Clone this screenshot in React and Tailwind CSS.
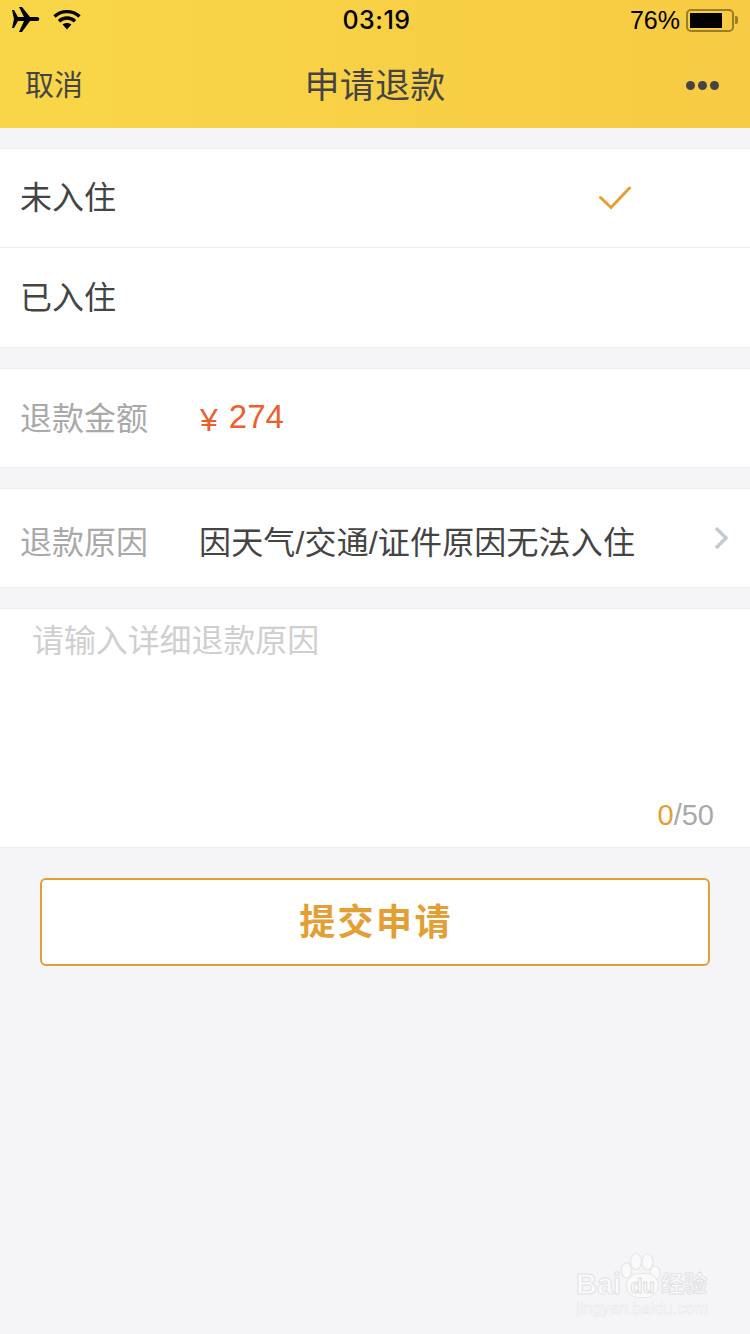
import React from 'react';

const font = { fontFamily: '"Liberation Sans", "Noto Sans CJK SC", sans-serif' };

const Plane = () => (
  <svg width="28" height="26" viewBox="0 0 28 26" className="text-black">
    <path fill="currentColor" d="M0 3 L2 3 L6 10 L12 10 L7 0 L10 0 L18 10 L25 10 C28 10 28 14 25 14 L18 14 L10 25 L7 25 L12 14 L6 14 L2 21 L0 21 L2 12 Z" />
  </svg>
);

const Wifi = () => (
  <svg width="28" height="22" viewBox="0 0 28 22">
    <path fill="none" stroke="#000" strokeWidth="3.4" d="M1.5 7.5 C8.5 1 19.5 1 26.5 7.5" />
    <path fill="none" stroke="#000" strokeWidth="3.4" d="M6 12.2 C10.5 8 17.5 8 22 12.2" />
    <path fill="#000" d="M9.6 15.4 C12 13.4 16 13.4 18.4 15.4 L14 20.6 Z" />
  </svg>
);

const Battery = () => (
  <div className="flex items-center">
    <div className="w-[48px] h-[23px] rounded-[5px] border-2 border-[#9a7d26] p-[2px] flex">
      <div className="w-[32px] h-full bg-black" />
    </div>
    <div className="w-[3px] h-[8px] bg-[#9a7d26] rounded-r-[2px] ml-[1px]" />
  </div>
);

const Row = ({ children, className = '' }) => (
  <div className={`bg-white border-y border-[#ececee] flex items-center ${className}`}>{children}</div>
);

export default function App() {
  return (
    <div style={font} className="w-[750px] h-[1334px] bg-[#f5f5f7] overflow-hidden relative flex flex-col">
      {/* header */}
      <div className="h-[128px] shrink-0 bg-gradient-to-r from-[#f9d648] to-[#f7cb43]">
        <div className="h-[40px] flex items-center justify-between pl-[12px] pr-[12px]">
          <div className="flex items-center gap-[13px] w-[200px]">
            <Plane />
            <Wifi />
          </div>
          <span className="text-[25px] font-medium text-black font-['Inter'] -mr-[3px] tracking-[0.5px] pt-[2px]">03:19</span>
          <div className="flex items-center justify-end gap-[6px] w-[200px]">
            <span className="text-[25px] text-black pt-[2px]">76%</span>
            <Battery />
          </div>
        </div>
        <div className="h-[88px] flex items-center justify-between pl-[25px] pr-[31px] pt-[3px]">
          <span className="w-[120px] text-[29px] text-[#444] pt-[2px]">取消</span>
          <span className="text-[35px] text-[#444] tracking-[0.3px] ml-[6px] pt-[2px]">申请退款</span>
          <div className="w-[120px] flex justify-end gap-[3px] -mt-[1px]">
            <i className="w-[9px] h-[9px] rounded-full bg-[#444]" />
            <i className="w-[9px] h-[9px] rounded-full bg-[#444]" />
            <i className="w-[9px] h-[9px] rounded-full bg-[#444]" />
          </div>
        </div>
      </div>

      {/* stay status */}
      <div className="mt-[20px] bg-white border-y border-[#ececee]">
        <div className="h-[99px] flex items-center justify-between pl-[20px] pr-[119px] border-b border-[#ececee]">
          <span className="text-[32px] text-[#444]">未入住</span>
          <svg width="32" height="24" viewBox="0 0 32 24">
            <path fill="none" stroke="#e39f33" strokeWidth="3" strokeLinecap="round" d="M1.5 11.5 L12 21.5 L30.5 2" />
          </svg>
        </div>
        <div className="h-[99px] flex items-center pl-[20px]">
          <span className="text-[32px] text-[#444]">已入住</span>
        </div>
      </div>

      {/* amount */}
      <Row className="mt-[20px] h-[100px] pl-[20px]">
        <span className="w-[180px] text-[32px] text-[#a9a9a9] pt-[2px]">退款金额</span>
        <span className="text-[#ee5f2c] text-[33px] flex items-baseline gap-[11px] -mt-[2px]">
          <span className="text-[32px] relative top-[3px]">¥</span>
          <span>274</span>
        </span>
      </Row>

      {/* reason */}
      <Row className="mt-[20px] h-[100px] pl-[20px] pr-[21px] justify-between">
        <div className="flex items-center pt-[9px]">
          <span className="w-[179px] text-[32px] text-[#a9a9a9]">退款原因</span>
          <span className="text-[32px] text-[#444] tracking-[0.15px]">因天气/交通/证件原因无法入住</span>
        </div>
        <svg width="15" height="24" viewBox="0 0 15 24" className="-mt-[1px]">
          <path fill="none" stroke="#c5cad2" strokeWidth="3.4" d="M2 2 L12 12 L2 22" />
        </svg>
      </Row>

      {/* details */}
      <div className="mt-[20px] h-[240px] bg-white border-y border-[#ececee] flex flex-col justify-between pl-[32px] pr-[36px] pb-[10px] pt-[8px]">
        <span className="text-[32px] text-[#cfcfcf] tracking-[-0.1px]">请输入详细退款原因</span>
        <span className="self-end text-[29px] text-[#a9a9a9]">
          <span className="text-[#e39f33]">0</span>/50
        </span>
      </div>

      {/* submit */}
      <button className="mt-[30px] mx-[40px] h-[88px] shrink-0 bg-white border-2 border-[#e39f33] rounded-[6px] text-[36px] font-bold text-[#e39f33] tracking-[2.4px] pt-[2px] pl-[2px]">
        提交申请
      </button>

      {/* watermark */}
      <div className="absolute left-[575px] top-[1252px] w-[140px] h-[70px]">
        <svg width="44" height="32" viewBox="0 0 44 32" className="absolute left-[45px] top-0">
          <g fill="#fafafb" stroke="#e6e6e8" strokeWidth="1.2">
            <ellipse cx="6.5" cy="18.5" rx="5" ry="7.5" />
            <ellipse cx="16" cy="9.5" rx="5.5" ry="8" />
            <ellipse cx="27.5" cy="10" rx="5.5" ry="8" />
            <ellipse cx="35" cy="21" rx="5" ry="7" />
          </g>
        </svg>
        <span className="absolute left-[1px] top-[19px] text-[29px] leading-[26px] font-bold [-webkit-text-stroke:1px_#e2e2e4] text-[#fafafb]">Bai</span>
        <div className="absolute left-[51px] top-[21px] w-[33px] h-[25px] rounded-full bg-[#fafafb] border border-[#e6e6e8] flex items-center justify-center">
          <span className="text-[20px] leading-none font-bold [-webkit-text-stroke:1px_#dedee0] text-[#fafafb]">du</span>
        </div>
        <span className="absolute left-[86px] top-[20px] text-[23px] leading-[24px] font-bold [-webkit-text-stroke:1px_#e2e2e4] text-[#fafafb] whitespace-nowrap">经验</span>
        <span className="absolute left-[1px] top-[46px] text-[16.4px] leading-[20px] [-webkit-text-stroke:0.5px_#e6e6e8] text-[#fafafb] whitespace-nowrap">jingyan.baidu.com</span>
      </div>
    </div>
  );
}
